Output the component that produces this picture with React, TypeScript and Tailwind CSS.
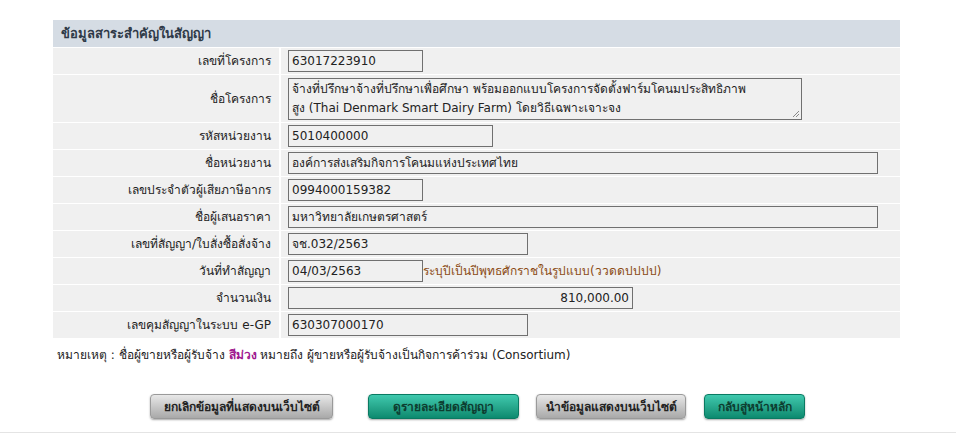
import React from 'react';

interface FieldRow {
	label: string;
	value: string;
	width: string;
	align?: 'left' | 'right';
	hint?: string;
}

const rowsTop: FieldRow[] = [
	{ label: 'เลขที่โครงการ', value: '63017223910', width: 'w-[135px]' },
];

const rowsBottom: FieldRow[] = [
	{ label: 'รหัสหน่วยงาน', value: '5010400000', width: 'w-[205px]' },
	{ label: 'ชื่อหน่วยงาน', value: 'องค์การส่งเสริมกิจการโคนมแห่งประเทศไทย', width: 'w-[590px]' },
	{ label: 'เลขประจำตัวผู้เสียภาษีอากร', value: '0994000159382', width: 'w-[135px]' },
	{ label: 'ชื่อผู้เสนอราคา', value: 'มหาวิทยาลัยเกษตรศาสตร์', width: 'w-[590px]' },
	{ label: 'เลขที่สัญญา/ใบสั่งซื้อสั่งจ้าง', value: 'จช.032/2563', width: 'w-[240px]' },
	{
		label: 'วันที่ทำสัญญา',
		value: '04/03/2563',
		width: 'w-[135px]',
		hint: 'ระบุปีเป็นปีพุทธศักราชในรูปแบบ(ววดดปปปป)'
	},
	{ label: 'จำนวนเงิน', value: '810,000.00', width: 'w-[345px]', align: 'right' },
	{ label: 'เลขคุมสัญญาในระบบ e-GP', value: '630307000170', width: 'w-[240px]' },
];

const Label: React.FC<{ text: string; tall?: boolean }> = ({ text, tall }) => (
	<div className={`bg-[#f0f0f0] flex items-center justify-end pr-[8px] ${tall ? 'h-[47px]' : 'h-[26px]'}`}>
		{text}
	</div>
);

const InputRow: React.FC<{ row: FieldRow }> = ({ row }) => (
	<>
		<Label text={row.label} />
		<div className="bg-[#f0f0f0] h-[26px] flex items-center pl-[7px]">
			<div
				className={`${row.width} h-[22px] border border-[#707070] bg-[#f0f0f0] flex items-center px-[3px] ${
					row.align === 'right' ? 'justify-end' : ''
				}`}
			>
				{row.value}
			</div>
			{row.hint && <span className="text-[#8b4a13]">{row.hint}</span>}
		</div>
	</>
);

const Button: React.FC<{ text: string; teal?: boolean; width: string }> = ({ text, teal, width }) => (
	<button
		className={`${width} h-[25px] rounded-[4px] text-[12px] font-bold flex items-center justify-center shadow-[0_1px_2px_rgba(0,0,0,0.35)] ${
			teal
				? 'bg-gradient-to-b from-[#3fc9ae] to-[#0b8a6f] text-[#0d3d30] border border-[#0a7a62]'
				: 'bg-gradient-to-b from-[#e8e8e8] to-[#a9a9a9] text-[#222] border border-[#9a9a9a]'
		}`}
	>
		{text}
	</button>
);

export default function App() {
	return (
		<div
			className="w-[956px] h-[435px] bg-white text-[12px] text-[#222] relative overflow-hidden"
			style={{ fontFamily: 'Tahoma, "DejaVu Sans", "Noto Sans", sans-serif' }}
		>
			<div className="ml-[53px] pt-[20px] w-[847px]">
				<div className="grid grid-cols-[226px_1fr] gap-x-[2px] gap-y-[1px]">
					<div className="col-span-2 h-[27px] bg-[#d5dce4] flex items-center pl-[8px] font-bold text-[#2f3a48] text-[13px]">
						ข้อมูลสาระสำคัญในสัญญา
					</div>
					{rowsTop.map((r) => (
						<InputRow key={r.label} row={r} />
					))}
					<Label text="ชื่อโครงการ" tall />
					<div className="bg-[#f0f0f0] h-[47px] flex items-center pl-[7px]">
						<div className="relative w-[514px] h-[42px] border border-[#707070] bg-[#f0f0f0] px-[3px] pt-[1px] leading-[19px]">
							จ้างที่ปรึกษาจ้างที่ปรึกษาเพื่อศึกษา พร้อมออกแบบโครงการจัดตั้งฟาร์มโคนมประสิทธิภาพ
							<br />
							สูง (Thai Denmark Smart Dairy Farm) โดยวิธีเฉพาะเจาะจง
							<svg className="absolute right-[1px] bottom-[1px]" width="9" height="9" viewBox="0 0 9 9">
								<path d="M8 2 L2 8 M8 5 L5 8" stroke="#888" strokeWidth="1" />
							</svg>
						</div>
					</div>
					{rowsBottom.map((r) => (
						<InputRow key={r.label} row={r} />
					))}
				</div>
				<div className="mt-[8px] pl-[4px] text-[12px]">
					หมายเหตุ : ชื่อผู้ขายหรือผู้รับจ้าง <span className="text-[#a0178f] font-bold">สีม่วง</span> หมายถึง
					ผู้ขายหรือผู้รับจ้างเป็นกิจการค้าร่วม (Consortium)
				</div>
			</div>
			<div className="flex items-center pl-[150px] mt-[30px]">
				<Button text="ยกเลิกข้อมูลที่แสดงบนเว็บไซต์" width="w-[183px]" />
				<div className="w-[35px]" />
				<Button text="ดูรายละเอียดสัญญา" teal width="w-[151px]" />
				<div className="w-[17px]" />
				<Button text="นำข้อมูลแสดงบนเว็บไซต์" width="w-[150px]" />
				<div className="w-[18px]" />
				<Button text="กลับสู่หน้าหลัก" teal width="w-[101px]" />
			</div>
			<div className="absolute left-0 right-0 top-[432px] h-[1px] bg-[#e4e4e4]" />
		</div>
	);
}
